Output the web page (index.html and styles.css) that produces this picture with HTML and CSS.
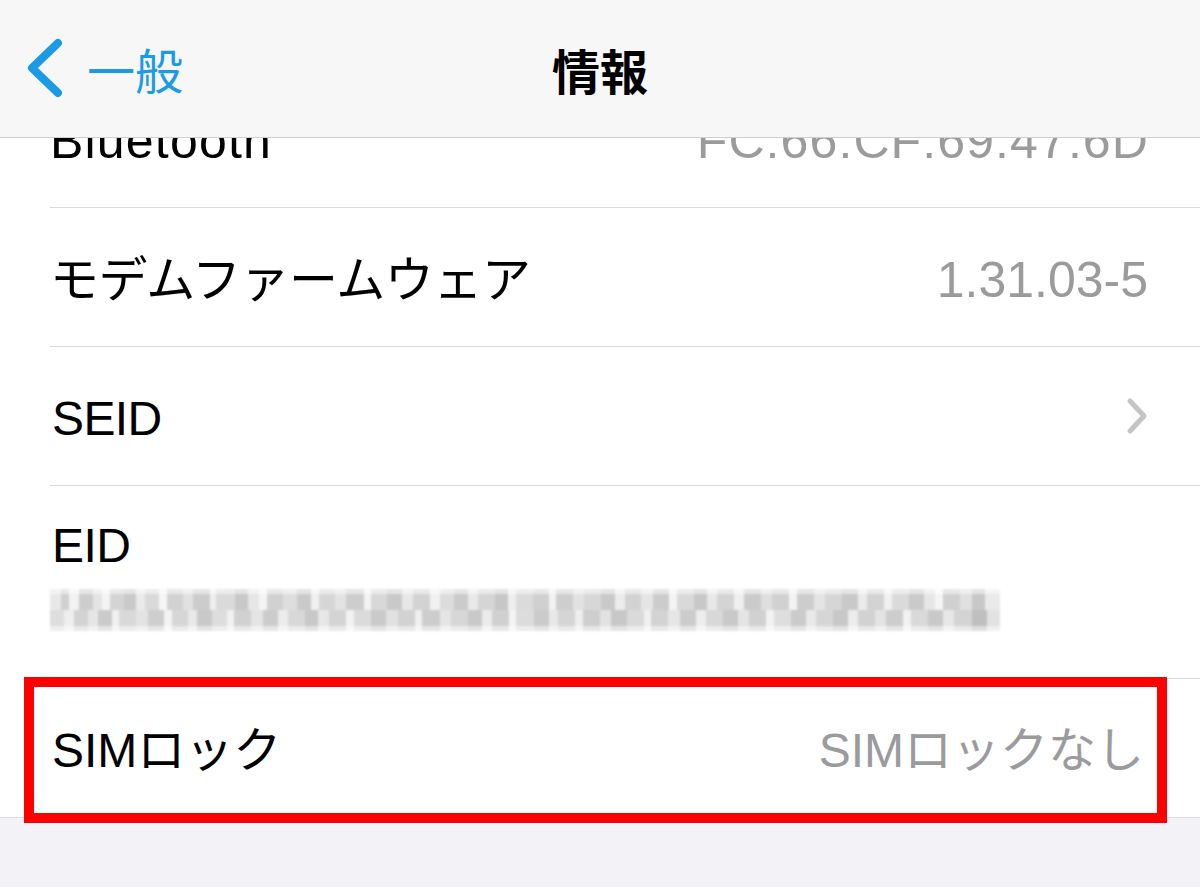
FILE: index.html
```html
<!DOCTYPE html>
<html lang="ja">
<head>
<meta charset="utf-8">
<title>情報</title>
<link rel="stylesheet" href="styles.css">
</head>
<body>
<header class="nav">
  <div class="back">
    <svg class="back-chev" width="40" height="64" viewBox="0 0 40 64"><path d="M34 7 L8 32 L34 57" fill="none" stroke="#1b9be6" stroke-width="8" stroke-linecap="round" stroke-linejoin="round"/></svg>
    <span class="back-text">一般</span>
  </div>
  <h1 class="title">情報</h1>
  <div class="spacer"></div>
</header>
<main class="list">
  <div class="inner">
    <div class="row"><div class="cell"><span class="label label-bt">Bluetooth</span><span class="value value-mac">FC:66:CF:69:47:6D</span></div></div>
    <div class="row"><div class="cell"><span class="label label-jp">モデムファームウェア</span><span class="value">1.31.03-5</span></div></div>
    <div class="row"><div class="cell"><span class="label label-seid">SEID</span>
      <svg class="chev" width="24" height="40" viewBox="0 0 24 40"><path d="M5 5 L19 20 L5 35" fill="none" stroke="#c4c4c8" stroke-width="5" stroke-linecap="round" stroke-linejoin="round"/></svg>
    </div></div>
    <div class="row"><div class="cell cell-eid"><span class="label label-seid">EID</span><div class="redacted"></div></div></div>
    <div class="row row-last"><div class="cell"><span class="label label-sim">SIMロック</span><span class="value value-sim">SIMロックなし</span></div>
      <div class="highlight"></div>
    </div>
  </div>
</main>
</body>
</html>
```

FILE: styles.css
```css
* { box-sizing: border-box; }
html, body {
  margin: 0;
  padding: 0;
}
body {
  width: 1200px;
  height: 887px;
  overflow: hidden;
  background: #f2f2f7;
  font-family: "Liberation Sans", "Noto Sans CJK JP", sans-serif;
  color: #000;
}
.nav {
  height: 138px;
  background: #f7f7f7;
  border-bottom: 1px solid #cfcfd2;
  display: grid;
  grid-template-columns: 1fr auto 1fr;
  align-items: center;
  position: relative;
  z-index: 2;
}
.back {
  display: flex;
  align-items: center;
  padding-left: 24px;
  padding-bottom: 1px;
}
.back-chev { display: block; }
.back-text {
  margin-left: 23px;
  font-size: 48px;
  line-height: 1;
  color: #1b9be6;
  font-family: "Noto Sans CJK JP", sans-serif;
}
.title {
  margin: 0;
  font-size: 48px;
  line-height: 1;
  font-weight: 700;
  font-family: "Noto Sans CJK JP", sans-serif;
}
.list {
  display: flow-root;
  position: relative;
  z-index: 1;
  background: #fff;
  border-bottom: 1px solid #dcdce0;
}
.inner {
  margin-top: -69px;
}
.row {
  padding-left: 50px;
  position: relative;
}
.cell {
  height: 139px;
  border-bottom: 1px solid #d9d9dc;
  display: flex;
  align-items: center;
  justify-content: space-between;
  padding-right: 52px;
  padding-top: 6px;
}
.row-last .cell { border-bottom: none; height: 138px; }
.label {
  font-size: 50px;
  line-height: 1.2;
  white-space: nowrap;
}
.label-bt { letter-spacing: 1.2px; }
.label-jp { font-size: 49px; letter-spacing: -0.4px; }
.label-seid { font-size: 48px; letter-spacing: -0.6px; padding-left: 2px; }
.label-sim { font-size: 48px; padding-left: 2px; }
.value {
  font-size: 50px;
  line-height: 1.2;
  color: #9b9b9e;
  white-space: nowrap;
}
.value-mac { letter-spacing: 1.1px; margin-right: -1px; }
.value-sim { font-size: 48px; margin-right: 4px; }
.chev { display: block; margin-right: -1px; margin-top: -6px; }
.cell-eid {
  height: 193px;
  flex-direction: column;
  align-items: flex-start;
  justify-content: flex-start;
  padding-top: 31px;
}
.redacted {
  margin-top: 14px;
  width: 950px;
  height: 42px;
  filter: blur(0.9px);
  background-repeat: no-repeat;
  background-size: 100% 100%, 100% 50%, 100% 50%;
  background-position: 0 0, 0 0, 0 100%;
  background-image:
    linear-gradient(180deg, rgba(255,255,255,0.5) 0 12%, rgba(255,255,255,0) 12% 88%, rgba(255,255,255,0.5) 88% 100%),
    linear-gradient(90deg,
      #e8e8e8 0 1.2%, #d0d0d0 1.2% 2%, #f2f2f2 2% 3%, #cdcdcd 3% 4.5%, #e4e4e4 4.5% 5.5%,
      #f4f4f4 5.5% 6.3%, #d4d4d4 6.3% 7.8%, #c9c9c9 7.8% 9%, #eaeaea 9% 10%, #d9d9d9 10% 11.5%,
      #f6f6f6 11.5% 12.3%, #d2d2d2 12.3% 14%, #e1e1e1 14% 15%, #cccccc 15% 16.8%, #efefef 16.8% 17.5%,
      #dadada 17.5% 19.5%, #c8c8c8 19.5% 20.8%, #e6e6e6 20.8% 22%, #f5f5f5 22% 22.8%, #d1d1d1 22.8% 24.5%,
      #dedede 24.5% 26%, #cacaca 26% 27.5%, #f0f0f0 27.5% 28.3%, #d6d6d6 28.3% 30%, #e3e3e3 30% 31.2%,
      #cdcdcd 31.2% 33%, #f3f3f3 33% 33.8%, #d8d8d8 33.8% 35.5%, #c9c9c9 35.5% 37%, #e7e7e7 37% 38.2%,
      #d3d3d3 38.2% 40%, #f1f1f1 40% 41%, #dcdcdc 41% 42.5%, #cbcbcb 42.5% 44%, #e9e9e9 44% 45%,
      #d5d5d5 45% 46.8%, #c7c7c7 46.8% 48.2%, #eeeeee 48.2% 49%, #dbdbdb 49% 50.8%, #d0d0d0 50.8% 52.5%,
      #f2f2f2 52.5% 53.3%, #cecece 53.3% 55%, #e2e2e2 55% 56.2%, #d7d7d7 56.2% 58%, #c9c9c9 58% 59.5%,
      #ececec 59.5% 60.5%, #d2d2d2 60.5% 62.2%, #e5e5e5 62.2% 63.5%, #cccccc 63.5% 65.2%, #f4f4f4 65.2% 66%,
      #d9d9d9 66% 67.8%, #c8c8c8 67.8% 69.2%, #e8e8e8 69.2% 70.2%, #d4d4d4 70.2% 72%, #efefef 72% 73%,
      #cbcbcb 73% 74.8%, #dfdfdf 74.8% 76%, #d1d1d1 76% 77.8%, #f3f3f3 77.8% 78.6%, #cdcdcd 78.6% 80.4%,
      #e4e4e4 80.4% 81.6%, #d6d6d6 81.6% 83.4%, #c9c9c9 83.4% 85%, #ebebeb 85% 86%, #d3d3d3 86% 87.8%,
      #f1f1f1 87.8% 88.6%, #dadada 88.6% 90.4%, #cacaca 90.4% 92%, #e6e6e6 92% 93.2%, #f5f5f5 93.2% 94%,
      #d0d0d0 94% 95.8%, #e0e0e0 95.8% 97%, #c8c8c8 97% 98.4%, #eaeaea 98.4% 100%),
    linear-gradient(90deg,
      #dedede 0 1.5%, #eeeeee 1.5% 2.5%, #d3d3d3 2.5% 4%, #e6e6e6 4% 5%, #cbcbcb 5% 6.5%,
      #f0f0f0 6.5% 7.3%, #d9d9d9 7.3% 9%, #e3e3e3 9% 10.3%, #cecece 10.3% 12%, #f3f3f3 12% 12.8%,
      #d6d6d6 12.8% 14.5%, #e9e9e9 14.5% 15.5%, #c9c9c9 15.5% 17%, #dddddd 17% 18.6%, #f1f1f1 18.6% 19.4%,
      #d1d1d1 19.4% 21.2%, #e4e4e4 21.2% 22.4%, #cccccc 22.4% 24%, #ececec 24% 25%, #d8d8d8 25% 26.8%,
      #c8c8c8 26.8% 28.2%, #e7e7e7 28.2% 29.4%, #d4d4d4 29.4% 31.2%, #f2f2f2 31.2% 32%, #dbdbdb 32% 33.8%,
      #cacaca 33.8% 35.4%, #e1e1e1 35.4% 36.6%, #d2d2d2 36.6% 38.4%, #efefef 38.4% 39.2%, #cdcdcd 39.2% 41%,
      #e5e5e5 41% 42.2%, #d7d7d7 42.2% 44%, #c9c9c9 44% 45.5%, #ebebeb 45.5% 46.5%, #d0d0d0 46.5% 48.3%,
      #f4f4f4 48.3% 49.1%, #dcdcdc 49.1% 50.9%, #cbcbcb 50.9% 52.5%, #e8e8e8 52.5% 53.5%, #d5d5d5 53.5% 55.3%,
      #eeeeee 55.3% 56.1%, #cecece 56.1% 57.9%, #e2e2e2 57.9% 59.1%, #c8c8c8 59.1% 60.7%, #dadada 60.7% 62.5%,
      #f0f0f0 62.5% 63.3%, #d3d3d3 63.3% 65.1%, #e6e6e6 65.1% 66.3%, #cccccc 66.3% 68%, #ededed 68% 69%,
      #d8d8d8 69% 70.8%, #c9c9c9 70.8% 72.4%, #e4e4e4 72.4% 73.6%, #d1d1d1 73.6% 75.4%, #f2f2f2 75.4% 76.2%,
      #dedede 76.2% 78%, #cbcbcb 78% 79.6%, #e9e9e9 79.6% 80.6%, #d6d6d6 80.6% 82.4%, #c8c8c8 82.4% 84%,
      #ececec 84% 85%, #d2d2d2 85% 86.8%, #e3e3e3 86.8% 88%, #cdcdcd 88% 89.8%, #f1f1f1 89.8% 90.6%,
      #d9d9d9 90.6% 92.4%, #c9c9c9 92.4% 94%, #e7e7e7 94% 95.2%, #d4d4d4 95.2% 97%, #bfbfbf 97% 98.6%,
      #e2e2e2 98.6% 100%);
}
.highlight {
  position: absolute;
  left: 24px;
  top: -2px;
  width: 1143px;
  height: 146px;
  border: 10px solid #ff0000;
  pointer-events: none;
  z-index: 3;
}
```
